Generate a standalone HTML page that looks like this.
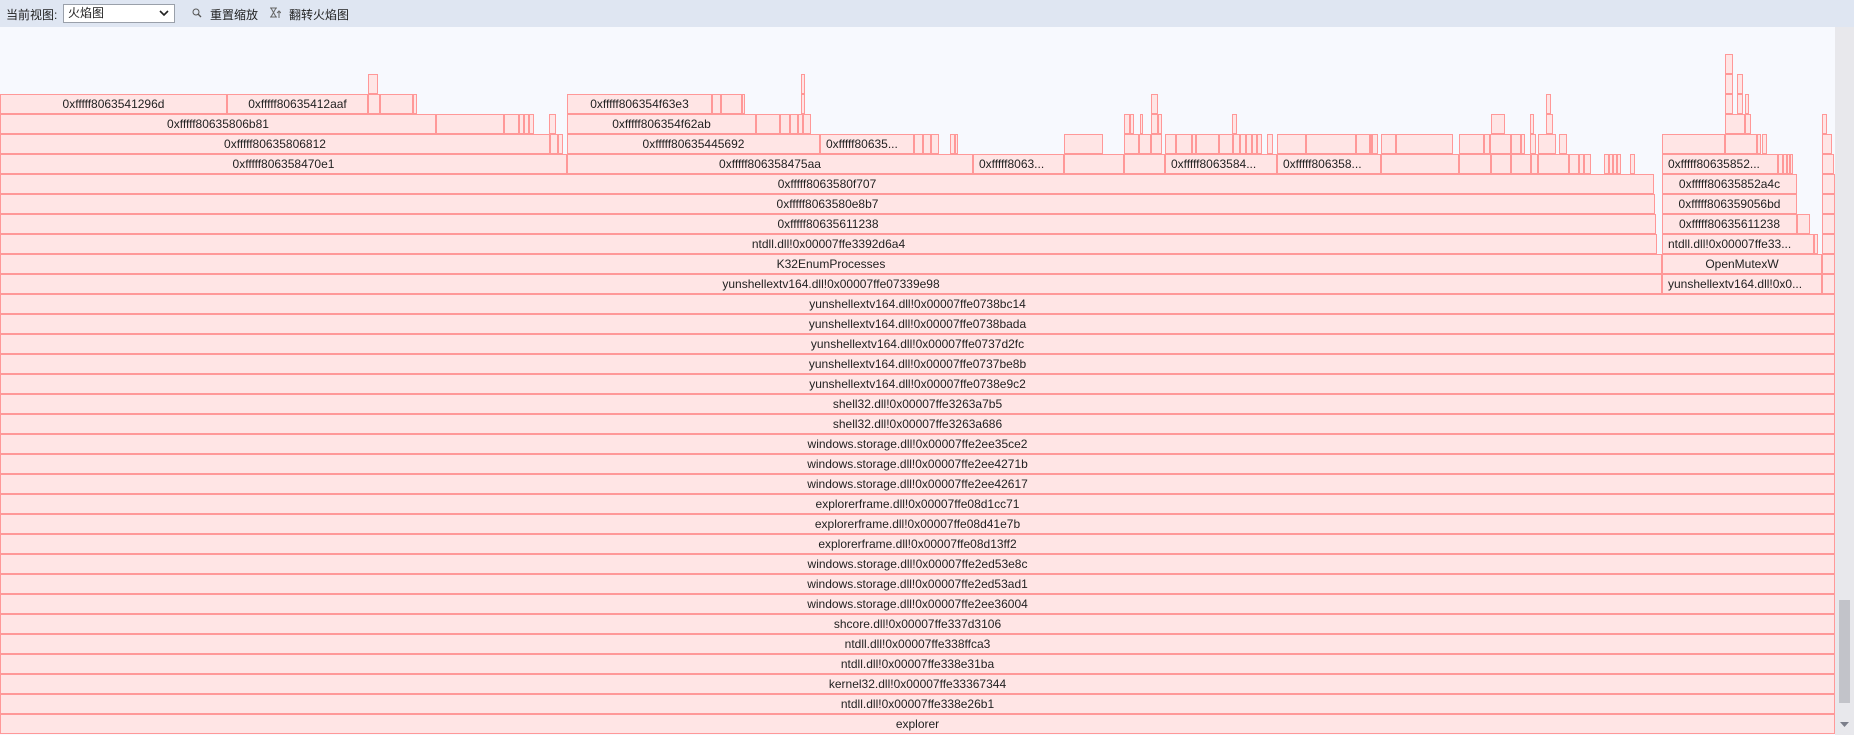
<!DOCTYPE html>
<html><head><meta charset="utf-8"><style>
*{margin:0;padding:0;box-sizing:border-box}
body{width:1854px;height:735px;overflow:hidden;background:#f7f9fe;font-family:"Liberation Sans","Noto Sans CJK SC",sans-serif;position:relative}
.tb{position:absolute;left:0;top:0;width:1854px;height:27px;background:#dfe6f2;font-size:12px;color:#222}
.tb span{position:absolute;top:6px}
.sel{position:absolute;left:63px;top:4px;width:112px;height:19px;background:#fff;border:1px solid #9aa0aa;font-size:12px;padding-left:4px;line-height:17px}
.b{position:absolute;height:20px;background:#ffe5e5;border:1px solid rgba(255,110,110,.65);font-size:12px;line-height:18px;text-align:center;color:#222;white-space:nowrap;overflow:hidden}
.l{text-align:left;padding-left:5px}
.sb{position:absolute;left:1835px;top:27px;width:19px;height:708px;background:#e8e8ec}
</style></head><body>
<div class="tb">
<span style="left:6px">当前视图:</span>
<div class="sel">火焰图<svg style="position:absolute;right:5px;top:5px" width="10" height="7"><path d="M1 1l4 4 4-4" stroke="#222" stroke-width="1.6" fill="none"/></svg></div>
<svg style="position:absolute;left:192px;top:8px" width="10" height="10"><circle cx="4" cy="4" r="3" stroke="#555" fill="none"/><path d="M6 6l3 3" stroke="#555" stroke-width="1.3"/></svg>
<span style="left:210px">重置缩放</span>
<svg style="position:absolute;left:269px;top:7px" width="12" height="12"><path d="M1 1h7M2 1l5 9M7 1l-5 9M1 10h7" stroke="#666" fill="none"/><path d="M10 11V4M8 6l2-2 2 2" stroke="#666" fill="none"/></svg>
<span style="left:289px">翻转火焰图</span>
</div>
<div class="sb"><div style="position:absolute;left:4px;top:573px;width:11px;height:103px;background:#c2c3c9"></div><svg style="position:absolute;left:5px;top:695px" width="9" height="6"><path d="M0 0h9L4.5 5z" fill="#7b7e8a"/></svg></div>

<div class="b" style="left:1725px;top:54px;width:8px"></div>
<div class="b" style="left:368px;top:74px;width:10px"></div>
<div class="b" style="left:801px;top:74px;width:4px"></div>
<div class="b" style="left:1725px;top:74px;width:8px"></div>
<div class="b" style="left:1737px;top:74px;width:6px"></div>

<div class="b" style="left:0;top:94px;width:227px">0xfffff8063541296d</div>
<div class="b" style="left:227px;top:94px;width:141px">0xfffff80635412aaf</div>
<div class="b" style="left:368px;top:94px;width:12px"></div>
<div class="b" style="left:380px;top:94px;width:33px"></div>
<div class="b" style="left:413px;top:94px;width:4px"></div>
<div class="b" style="left:567px;top:94px;width:145px">0xfffff806354f63e3</div>
<div class="b" style="left:712px;top:94px;width:9px"></div>
<div class="b" style="left:721px;top:94px;width:21px"></div>
<div class="b" style="left:742px;top:94px;width:3px"></div>
<div class="b" style="left:801px;top:94px;width:4px"></div>
<div class="b" style="left:1151px;top:94px;width:7px"></div>
<div class="b" style="left:1546px;top:94px;width:5px"></div>
<div class="b" style="left:1725px;top:94px;width:8px"></div>
<div class="b" style="left:1737px;top:94px;width:6px"></div>
<div class="b" style="left:1745px;top:94px;width:4px"></div>

<div class="b" style="left:0;top:114px;width:436px">0xfffff80635806b81</div>
<div class="b" style="left:436px;top:114px;width:68px"></div>
<div class="b" style="left:504px;top:114px;width:15px"></div>
<div class="b" style="left:519px;top:114px;width:5px"></div>
<div class="b" style="left:524px;top:114px;width:5px"></div>
<div class="b" style="left:529px;top:114px;width:5px"></div>
<div class="b" style="left:549px;top:114px;width:7px"></div>
<div class="b" style="left:567px;top:114px;width:189px">0xfffff806354f62ab</div>
<div class="b" style="left:756px;top:114px;width:24px"></div>
<div class="b" style="left:780px;top:114px;width:10px"></div>
<div class="b" style="left:790px;top:114px;width:8px"></div>
<div class="b" style="left:798px;top:114px;width:5px"></div>
<div class="b" style="left:803px;top:114px;width:8px"></div>
<div class="b" style="left:1124px;top:114px;width:6px"></div>
<div class="b" style="left:1130px;top:114px;width:4px"></div>
<div class="b" style="left:1140px;top:114px;width:3px"></div>
<div class="b" style="left:1151px;top:114px;width:7px"></div>
<div class="b" style="left:1158px;top:114px;width:4px"></div>
<div class="b" style="left:1232px;top:114px;width:5px"></div>
<div class="b" style="left:1491px;top:114px;width:14px"></div>
<div class="b" style="left:1530px;top:114px;width:4px"></div>
<div class="b" style="left:1546px;top:114px;width:7px"></div>
<div class="b" style="left:1725px;top:114px;width:20px"></div>
<div class="b" style="left:1745px;top:114px;width:6px"></div>
<div class="b" style="left:1822px;top:114px;width:5px"></div>

<div class="b" style="left:0;top:134px;width:550px">0xfffff80635806812</div>
<div class="b" style="left:550px;top:134px;width:8px"></div>
<div class="b" style="left:558px;top:134px;width:5px"></div>
<div class="b" style="left:567px;top:134px;width:253px">0xfffff80635445692</div>
<div class="b l" style="left:820px;top:134px;width:94px">0xfffff80635...</div>
<div class="b" style="left:914px;top:134px;width:9px"></div>
<div class="b" style="left:923px;top:134px;width:8px"></div>
<div class="b" style="left:931px;top:134px;width:8px"></div>
<div class="b" style="left:950px;top:134px;width:5px"></div>
<div class="b" style="left:955px;top:134px;width:3px"></div>
<div class="b" style="left:1064px;top:134px;width:39px"></div>
<div class="b" style="left:1124px;top:134px;width:15px"></div>
<div class="b" style="left:1139px;top:134px;width:12px"></div>
<div class="b" style="left:1151px;top:134px;width:11px"></div>
<div class="b" style="left:1165px;top:134px;width:11px"></div>
<div class="b" style="left:1176px;top:134px;width:16px"></div>
<div class="b" style="left:1192px;top:134px;width:4px"></div>
<div class="b" style="left:1196px;top:134px;width:23px"></div>
<div class="b" style="left:1219px;top:134px;width:14px"></div>
<div class="b" style="left:1233px;top:134px;width:7px"></div>
<div class="b" style="left:1240px;top:134px;width:6px"></div>
<div class="b" style="left:1246px;top:134px;width:6px"></div>
<div class="b" style="left:1252px;top:134px;width:5px"></div>
<div class="b" style="left:1257px;top:134px;width:5px"></div>
<div class="b" style="left:1267px;top:134px;width:6px"></div>
<div class="b" style="left:1277px;top:134px;width:29px"></div>
<div class="b" style="left:1306px;top:134px;width:50px"></div>
<div class="b" style="left:1356px;top:134px;width:14px"></div>
<div class="b" style="left:1370px;top:134px;width:2px"></div>
<div class="b" style="left:1372px;top:134px;width:6px"></div>
<div class="b" style="left:1381px;top:134px;width:15px"></div>
<div class="b" style="left:1396px;top:134px;width:57px"></div>
<div class="b" style="left:1459px;top:134px;width:25px"></div>
<div class="b" style="left:1484px;top:134px;width:6px"></div>
<div class="b" style="left:1490px;top:134px;width:21px"></div>
<div class="b" style="left:1511px;top:134px;width:10px"></div>
<div class="b" style="left:1521px;top:134px;width:4px"></div>
<div class="b" style="left:1530px;top:134px;width:6px"></div>
<div class="b" style="left:1538px;top:134px;width:18px"></div>
<div class="b" style="left:1559px;top:134px;width:8px"></div>
<div class="b" style="left:1662px;top:134px;width:63px"></div>
<div class="b" style="left:1725px;top:134px;width:32px"></div>
<div class="b" style="left:1757px;top:134px;width:4px"></div>
<div class="b" style="left:1762px;top:134px;width:5px"></div>
<div class="b" style="left:1822px;top:134px;width:10px"></div>

<div class="b" style="left:0;top:154px;width:567px">0xfffff806358470e1</div>
<div class="b" style="left:567px;top:154px;width:406px">0xfffff806358475aa</div>
<div class="b l" style="left:973px;top:154px;width:91px">0xfffff8063...</div>
<div class="b" style="left:1064px;top:154px;width:60px"></div>
<div class="b" style="left:1124px;top:154px;width:41px"></div>
<div class="b l" style="left:1165px;top:154px;width:112px">0xfffff8063584...</div>
<div class="b l" style="left:1277px;top:154px;width:104px">0xfffff806358...</div>
<div class="b" style="left:1381px;top:154px;width:78px"></div>
<div class="b" style="left:1459px;top:154px;width:32px"></div>
<div class="b" style="left:1491px;top:154px;width:20px"></div>
<div class="b" style="left:1511px;top:154px;width:20px"></div>
<div class="b" style="left:1531px;top:154px;width:7px"></div>
<div class="b" style="left:1538px;top:154px;width:31px"></div>
<div class="b" style="left:1569px;top:154px;width:10px"></div>
<div class="b" style="left:1579px;top:154px;width:5px"></div>
<div class="b" style="left:1584px;top:154px;width:7px"></div>
<div class="b" style="left:1604px;top:154px;width:5px"></div>
<div class="b" style="left:1609px;top:154px;width:4px"></div>
<div class="b" style="left:1613px;top:154px;width:4px"></div>
<div class="b" style="left:1617px;top:154px;width:4px"></div>
<div class="b" style="left:1630px;top:154px;width:5px"></div>
<div class="b l" style="left:1662px;top:154px;width:116px">0xfffff80635852...</div>
<div class="b" style="left:1778px;top:154px;width:5px"></div>
<div class="b" style="left:1783px;top:154px;width:4px"></div>
<div class="b" style="left:1787px;top:154px;width:3px"></div>
<div class="b" style="left:1790px;top:154px;width:3px"></div>
<div class="b" style="left:1822px;top:154px;width:12px"></div>

<div class="b" style="left:0;top:174px;width:1654px">0xfffff8063580f707</div>
<div class="b" style="left:1662px;top:174px;width:135px">0xfffff80635852a4c</div>
<div class="b" style="left:1822px;top:174px;width:13px"></div>
<div class="b" style="left:0;top:194px;width:1655px">0xfffff8063580e8b7</div>
<div class="b" style="left:1662px;top:194px;width:135px">0xfffff806359056bd</div>
<div class="b" style="left:1822px;top:194px;width:13px"></div>
<div class="b" style="left:0;top:214px;width:1656px">0xfffff80635611238</div>
<div class="b" style="left:1662px;top:214px;width:135px">0xfffff80635611238</div>
<div class="b" style="left:1797px;top:214px;width:13px"></div>
<div class="b" style="left:1822px;top:214px;width:13px"></div>
<div class="b" style="left:0;top:234px;width:1657px">ntdll.dll!0x00007ffe3392d6a4</div>
<div class="b l" style="left:1662px;top:234px;width:152px">ntdll.dll!0x00007ffe33...</div>
<div class="b" style="left:1814px;top:234px;width:4px"></div>
<div class="b" style="left:1822px;top:234px;width:13px"></div>
<div class="b" style="left:0;top:254px;width:1662px">K32EnumProcesses</div>
<div class="b" style="left:1662px;top:254px;width:160px">OpenMutexW</div>
<div class="b" style="left:1822px;top:254px;width:13px"></div>
<div class="b" style="left:0;top:274px;width:1662px">yunshellextv164.dll!0x00007ffe07339e98</div>
<div class="b l" style="left:1662px;top:274px;width:160px">yunshellextv164.dll!0x0...</div>
<div class="b" style="left:1822px;top:274px;width:13px"></div>

<div class="b" style="left:0;top:294px;width:1835px">yunshellextv164.dll!0x00007ffe0738bc14</div>
<div class="b" style="left:0;top:314px;width:1835px">yunshellextv164.dll!0x00007ffe0738bada</div>
<div class="b" style="left:0;top:334px;width:1835px">yunshellextv164.dll!0x00007ffe0737d2fc</div>
<div class="b" style="left:0;top:354px;width:1835px">yunshellextv164.dll!0x00007ffe0737be8b</div>
<div class="b" style="left:0;top:374px;width:1835px">yunshellextv164.dll!0x00007ffe0738e9c2</div>
<div class="b" style="left:0;top:394px;width:1835px">shell32.dll!0x00007ffe3263a7b5</div>
<div class="b" style="left:0;top:414px;width:1835px">shell32.dll!0x00007ffe3263a686</div>
<div class="b" style="left:0;top:434px;width:1835px">windows.storage.dll!0x00007ffe2ee35ce2</div>
<div class="b" style="left:0;top:454px;width:1835px">windows.storage.dll!0x00007ffe2ee4271b</div>
<div class="b" style="left:0;top:474px;width:1835px">windows.storage.dll!0x00007ffe2ee42617</div>
<div class="b" style="left:0;top:494px;width:1835px">explorerframe.dll!0x00007ffe08d1cc71</div>
<div class="b" style="left:0;top:514px;width:1835px">explorerframe.dll!0x00007ffe08d41e7b</div>
<div class="b" style="left:0;top:534px;width:1835px">explorerframe.dll!0x00007ffe08d13ff2</div>
<div class="b" style="left:0;top:554px;width:1835px">windows.storage.dll!0x00007ffe2ed53e8c</div>
<div class="b" style="left:0;top:574px;width:1835px">windows.storage.dll!0x00007ffe2ed53ad1</div>
<div class="b" style="left:0;top:594px;width:1835px">windows.storage.dll!0x00007ffe2ee36004</div>
<div class="b" style="left:0;top:614px;width:1835px">shcore.dll!0x00007ffe337d3106</div>
<div class="b" style="left:0;top:634px;width:1835px">ntdll.dll!0x00007ffe338ffca3</div>
<div class="b" style="left:0;top:654px;width:1835px">ntdll.dll!0x00007ffe338e31ba</div>
<div class="b" style="left:0;top:674px;width:1835px">kernel32.dll!0x00007ffe33367344</div>
<div class="b" style="left:0;top:694px;width:1835px">ntdll.dll!0x00007ffe338e26b1</div>
<div class="b" style="left:0;top:714px;width:1835px">explorer</div>
</body></html>
